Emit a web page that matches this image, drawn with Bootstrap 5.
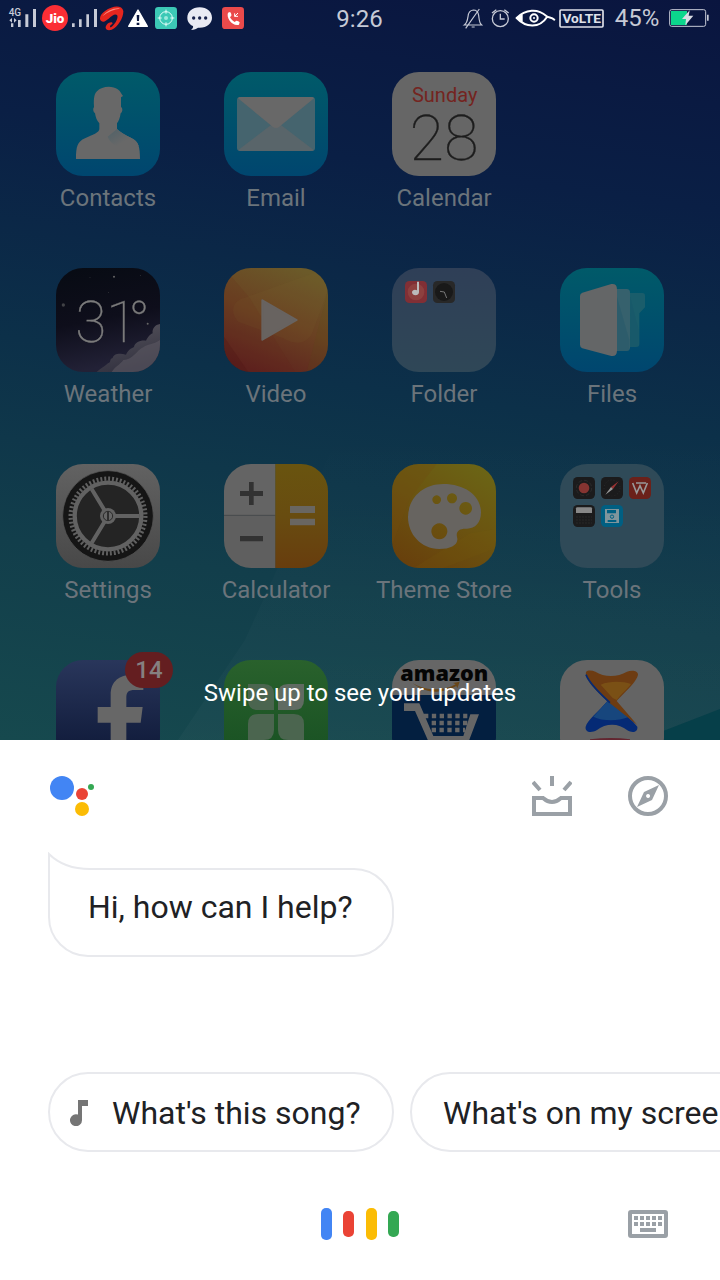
<!DOCTYPE html>
<html lang="en">
<head>
<meta charset="utf-8">
<meta name="viewport" content="width=device-width, initial-scale=1">
<title>Assistant</title>
<link href="https://cdn.jsdelivr.net/npm/bootstrap@5.3.0/dist/css/bootstrap.min.css" rel="stylesheet">
<style>
body{font-family:Roboto,"Noto Sans",sans-serif;color:#202124;background:#fff}
svg{display:block;flex:none}
.phone{height:100vh}
.launcher{background:linear-gradient(188deg,#0a153f 0%,#0a1f45 25%,#0c3049 52%,#123e4b 76%,#16494e 100%);min-height:0}
.wall{inset:auto 0 0 0;width:100%;height:320px}
.status{height:40px;padding:0 9px 0 8px;color:#c6cad6;font-size:24px;line-height:38px}
.status svg{height:40px}
.status-side{flex:1 1 0}
.pct{width:62px;text-align:center;line-height:36px}
.apps{padding:32px 24px 0;row-gap:52px}
.app{color:#6b747b;font-size:24px;line-height:32px;height:144px;white-space:nowrap}
.app:hover{color:#6b747b}
.tile{width:104px;height:104px;margin-bottom:6px}
.tile svg{width:104px;height:104px;border-radius:27px}
.count{top:-8px;right:-13px;width:48px;height:36px;border-radius:18px;background:#641e20;color:#858080;font-size:24px;line-height:36px}
.swipe{inset:auto 0 31px 0;color:#fff;font-size:24px;line-height:32px}
.sheet{padding:36px 0 40px}
.sheet-top{height:40px;padding:0 52px 0 48px}
.actions{gap:56px}
.bubble{margin:52px 48px 0;height:89px;padding:0 38px 12px;min-width:346px;border:2px solid #e8e9ed;border-radius:0 40px 40px 40px;font-size:32px}
.tail{left:-2px;top:-18px}
.chips{margin-top:115px;padding-left:48px;gap:16px}
.chip{height:80px;border:2px solid #e8e9ed;border-radius:40px;padding:2px 31px 0;font-size:32px;white-space:nowrap;flex:none;color:#202124}
.chip-icon{min-width:346px;padding-left:20px;gap:22px}
.sheet-foot{margin-top:56px;padding:0 52px}
</style>
</head>
<body>
<div class="phone d-flex flex-column overflow-hidden">
<main class="launcher position-relative flex-grow-1 overflow-hidden">
  <svg class="wall position-absolute" viewBox="0 0 720 320" preserveAspectRatio="none" aria-hidden="true">
    <defs><linearGradient id="ray" x2="0" y2="1"><stop stop-color="#fff" stop-opacity="0"/><stop offset="1" stop-color="#fff" stop-opacity=".025"/></linearGradient></defs>
    <path d="M178 320L245 220 345 0H720V320Z" fill="url(#ray)"/>
    <path d="M640 320L720 289V320Z" fill="#063f49"/>
  </svg>

  <header class="status position-relative d-flex align-items-start">
    <div class="status-side d-flex">
      <svg width="32" viewBox="24 0 96 120" role="img" aria-label="4G signal"><g fill="#c6cad6"><path d="M33 70h7v11h-7zM54 60h8v21h-8zM76 43h9v38h-9zM99 27h9v54h-9z"/><text x="26" y="48" font-size="30" font-weight="500" font-family="Roboto">4G</text><path d="M28 61l8-7v14zM50 61l-8-7v14z"/></g></svg>
      <svg width="30" viewBox="120 0 90 120"><circle cx="165" cy="54" r="39" fill="#fb2e35"/><text x="165" y="69" font-size="40" font-weight="900" font-family="Roboto" fill="#fff" text-anchor="middle">Jio</text></svg>
      <svg width="29" viewBox="210 0 87 120" role="img" aria-label="Signal"><path d="M216 70h8v11h-8zM237 58h8v23h-8zM259 43h8v38h-8zM282 27h9v54h-9z" fill="#c6cad6"/></svg>
      <svg width="27" viewBox="297 0 81 120" aria-hidden="true"><path d="M309 65C293 62 300 43 315 33C338 16 366 14 370 33C371 52 354 82 335 89C320 94 312 85 320 74C329 64 342 66 336 73C329 76 328 84 334 81C344 74 357 52 351 45C345 40 336 47 326 56C319 61 314 66 309 65Z" fill="#e5261f"/><path d="M307 49C322 31 345 22 360 26C342 27 324 35 307 49Z" fill="#ff897c"/></svg>
      <svg width="24" viewBox="378 0 72 120" aria-hidden="true"><path d="M414 30L442 79H386Z" fill="#fff" stroke="#fff" stroke-width="4" stroke-linejoin="round"/><path d="M410 45h8l-1 18h-6zM410 68h8v7h-8z" fill="#0a1740"/></svg>
      <svg width="32" viewBox="450 0 96 120" aria-hidden="true"><rect x="465" y="21" width="66" height="66" rx="10" fill="#3cc9b6"/><circle cx="498" cy="54" r="19" fill="none" stroke="#e8fffb" stroke-width="3"/><circle cx="498" cy="54" r="6" fill="#9aeadd"/><path d="M498 29v12M498 67v12M473 54h12M511 54h12" stroke="#e8fffb" stroke-width="3"/></svg>
      <svg width="35" viewBox="546 0 105 120" aria-hidden="true"><path d="M599 22C577 22 562 36 562 53C562 65 569 73 579 78C581 83 576 87 573 90C583 90 590 86 594 83C620 85 636 70 636 53C636 36 621 22 599 22Z" fill="#e9eaf3"/><g fill="#17214a"><circle cx="581" cy="54" r="5"/><circle cx="599" cy="54" r="5"/><circle cx="617" cy="54" r="5"/></g></svg>
      <svg width="32" viewBox="651 0 96 120" aria-hidden="true"><rect x="666" y="21" width="66" height="66" rx="10" fill="#ea4a4b"/><path d="M684 38l6-2c3 3 5 8 4 11l-4 5c4 7 8 10 14 14l5-4c4 0 9 3 10 5l-2 7c-20 5-39-20-33-36z" fill="#fff"/><path d="M714 39l-10 10m0-9v9h10" fill="none" stroke="#fff" stroke-width="3"/></svg>
    </div>
    <time>9:26</time>
    <div class="status-side d-flex justify-content-end">
      <svg width="27" viewBox="30 0 81 120" aria-hidden="true"><g fill="none" stroke="#c6cad6" stroke-width="3.500"><path d="M43 75H95C87 68 88 60 86 46C84 33 78 30 70 30C60 31 55 38 54 50C52 65 50 70 43 75ZM65 81h9M88 27L47 85"/></g></svg>
      <svg width="26" viewBox="111 0 78 120" aria-hidden="true"><g fill="none" stroke="#c6cad6" stroke-width="4"><circle cx="151" cy="56" r="24"/><path d="M151 41v16h13M126 39l13-10M176 39l-13-10"/></g></svg>
      <svg width="44" viewBox="189 0 132 120" aria-hidden="true"><path d="M200 54C226 27 264 25 289 48C296 54 304 51 313 59M200 54C226 82 268 87 291 51" fill="none" stroke="#fff" stroke-width="6" stroke-linecap="round"/><path d="M196 54l22-11v22z" fill="#fff"/><circle cx="252" cy="54" r="11" fill="none" stroke="#fff" stroke-width="6"/><circle cx="252" cy="54" r="3" fill="#fff"/></svg>
      <svg width="49" viewBox="321 0 147 120"><rect x="330" y="30" width="129" height="51" rx="3" fill="none" stroke="#dfe1e9" stroke-width="5"/><text x="395" y="70" font-size="41" font-weight="700" font-family="Roboto" fill="#dfe1e9" text-anchor="middle">VoLTE</text></svg>
      <span class="pct">45%</span>
      <svg width="43" viewBox="654 0 129 120" role="img" aria-label="Battery charging"><rect x="659" y="29" width="108" height="50" rx="6" fill="none" stroke="#c6cad6" stroke-width="3"/><path d="M663 33h48v42h-48z" fill="#0bd68c"/><path d="M771 44h5v18h-5z" fill="#c6cad6"/><path d="M719 31L696 57h12l-2 19 24-29h-14z" fill="#d9dce4"/></svg>
    </div>
  </header>

  <div class="apps row row-cols-4 gx-0 position-relative mx-0">
    <div class="col d-flex justify-content-center"><button class="app btn p-0 border-0 d-flex flex-column align-items-center">
      <span class="tile"><svg viewBox="48 36 312 312"><defs><linearGradient id="cy" x2="0" y2="1"><stop stop-color="#005a69"/><stop offset="1" stop-color="#00466f"/></linearGradient><linearGradient id="sh" x2="1" y2="1"><stop stop-color="#4f6168"/><stop offset=".6" stop-color="#686868"/></linearGradient></defs><path fill="url(#cy)" d="M48 36h312v312H48z"/><path d="M108 297C108 260 112 245 135 235C158 224 178 218 178 207V190C170 182 167 172 165 160C159 156 158 146 162 141C160 110 165 99 171 94C184 78 218 76 233 88C242 94 243 102 249 108L243 112V141C249 145 248 156 242 160C240 174 236 184 231 190V207C240 217 255 224 274 234C296 244 300 262 300 297Z" fill="#686868"/><path d="M231 207C240 217 255 224 274 234C286 240 292 246 296 258C260 272 215 262 203 230Z" fill="url(#sh)"/></svg></span>Contacts</button></div>
    <div class="col d-flex justify-content-center"><button class="app btn p-0 border-0 d-flex flex-column align-items-center">
      <span class="tile"><svg viewBox="552 36 312 312"><path fill="url(#cy)" d="M552 36h312v312H552z"/><rect x="591" y="111" width="234" height="162" rx="9" fill="#45646e"/><path d="M595 270L700 190h16L821 270Q819 273 814 273H602Q597 273 595 270Z" fill="#59656a"/><path d="M594 115Q597 111 602 111H814Q819 111 822 115L718 200Q708 208 698 200Z" fill="#686868"/></svg></span>Email</button></div>
    <div class="col d-flex justify-content-center"><button class="app btn p-0 border-0 d-flex flex-column align-items-center">
      <span class="tile"><svg viewBox="36 36 312 312"><path fill="#666" d="M36 36h312v312H36z"/><text x="194" y="126" text-anchor="middle" font-family="Roboto" font-size="60" fill="#742420">Sunday</text><text x="192" y="300" text-anchor="middle" font-family="Roboto" font-weight="100" font-size="189" fill="#1d1d1d" stroke="#1d1d1d" stroke-width="1">28</text></svg></span>Calendar</button></div>
    <div class="col"></div>

    <div class="col d-flex justify-content-center"><button class="app btn p-0 border-0 d-flex flex-column align-items-center">
      <span class="tile"><svg viewBox="48 24 312 312"><defs><linearGradient id="nt" x2=".2" y2="1"><stop stop-color="#070b13"/><stop offset=".55" stop-color="#0e0e1b"/><stop offset="1" stop-color="#222136"/></linearGradient><linearGradient id="cl" x2=".3" y2="1"><stop stop-color="#56545c"/><stop offset="1" stop-color="#343341"/></linearGradient></defs><path fill="url(#nt)" d="M48 24h312v312H48z"/><path d="M360 192C345 194 336 206 338 220C325 226 322 236 318 242C300 240 284 248 282 261C266 268 262 276 258 284C238 278 220 282 218 294C206 298 216 305 204 310C192 322 180 326 170 336H360Z" fill="url(#cl)"/><path d="M360 240C340 254 320 252 310 262C290 270 280 300 250 300C240 314 225 320 215 336H360Z" fill="#5c5962" opacity=".6"/><g fill="#666"><circle cx="222" cy="50" r="3"/><circle cx="70" cy="135" r="5" opacity=".6"/><circle cx="323" cy="191" r="3"/><circle cx="301" cy="47" r="1"/><circle cx="150" cy="52" r="1"/><circle cx="206" cy="98" r="1"/></g><text x="106" y="245" font-family="Roboto" font-weight="100" font-size="170" fill="#7b7b7b" stroke="#7b7b7b" stroke-width="1">31<tspan dx="-27">°</tspan></text></svg></span>Weather</button></div>
    <div class="col d-flex justify-content-center"><button class="app btn p-0 border-0 d-flex flex-column align-items-center">
      <span class="tile"><svg viewBox="552 24 312 312"><defs><linearGradient id="vd" x1=".7" x2=".3" y2="1"><stop stop-color="#6b5a29"/><stop offset=".5" stop-color="#6a4122"/><stop offset="1" stop-color="#5d211e"/></linearGradient></defs><path fill="url(#vd)" d="M552 24h312v312H552z"/><path d="M552 24L630 115 765 336H552Z" fill="#601d1c" opacity=".12"/><path d="M820 40L610 115C575 125 570 160 595 185L730 235C780 265 810 240 820 210L864 90V24Z" fill="#807030" opacity=".1"/><path d="M864 90L800 336H864Z" fill="#551" opacity=".12"/><path d="M552 230L625 336H552Z" fill="#411" opacity=".2"/><path d="M667 121L770 180 667 239Z" fill="#686360" stroke="#686360" stroke-width="6" stroke-linejoin="round"/></svg></span>Video</button></div>
    <div class="col d-flex justify-content-center"><button class="app btn p-0 border-0 d-flex flex-column align-items-center">
      <span class="tile"><svg viewBox="36 24 312 312"><defs><linearGradient id="fo" x2="0" y2="1"><stop stop-color="#2f3f57"/><stop offset="1" stop-color="#2f4757"/></linearGradient></defs><path fill="url(#fo)" d="M36 24h312v312H36z"/><rect x="75" y="63" width="66" height="66" rx="13" fill="#812f35"/><circle cx="108" cy="96" r="25" fill="#8d403f"/><path d="M111 65h6v32c0 12-21 12-21 0 0-7 9-10 15-6z" fill="#bbb"/><rect x="159" y="63" width="66" height="66" rx="13" fill="#282828"/><circle cx="192" cy="96" r="27" fill="#191919"/><path d="M180 94l13 2 7 18" fill="none" stroke="#777" stroke-width="3"/></svg></span>Folder</button></div>
    <div class="col d-flex justify-content-center"><button class="app btn p-0 border-0 d-flex flex-column align-items-center">
      <span class="tile"><svg viewBox="540 24 312 312"><path fill="url(#cy)" d="M540 24h312v312H540z"/><path d="M700 99H787Q795 99 795 107V142L778 160V252Q778 261 768 261H700Z" fill="#1a5d6b"/><path d="M690 87H740Q750 87 750 98V262Q750 273 740 273H690Z" fill="#36616d"/><path d="M751 110L776 210V252Q775 261 768 261H750ZM711 110L748 240V262Q748 273 740 273H711Z" fill="#125167" opacity=".25"/><path d="M600 108Q600 101 607 98L694 72Q711 70 711 88V272Q711 290 694 288L607 265Q600 263 600 254Z" fill="#646667"/></svg></span>Files</button></div>

    <div class="col d-flex justify-content-center"><button class="app btn p-0 border-0 d-flex flex-column align-items-center">
      <span class="tile"><svg viewBox="48 27 312 312"><defs><linearGradient id="st" x2="0" y2="1"><stop stop-color="#626262"/><stop offset="1" stop-color="#484848"/></linearGradient></defs><path fill="url(#st)" d="M48 27h312v312H48z"/><circle cx="204" cy="183" r="136" fill="#151515"/><circle cx="204" cy="183" r="136" fill="none" stroke="#5c5c5c" stroke-width="2"/><circle cx="204" cy="183" r="112" fill="none" stroke="#606060" stroke-width="13" stroke-dasharray="5.860 5.860"/><circle cx="204" cy="183" r="100" fill="#242424" stroke="#626262" stroke-width="13"/><path d="M204 183H298M204 183L155 102M204 183L155 264" stroke="#626262" stroke-width="12"/><circle cx="204" cy="183" r="24" fill="#626262"/><circle cx="204" cy="183" r="14" fill="#666" stroke="#292929" stroke-width="3"/><path d="M204 171v24" stroke="#252525" stroke-width="5"/></svg></span>Settings</button></div>
    <div class="col d-flex justify-content-center"><button class="app btn p-0 border-0 d-flex flex-column align-items-center">
      <span class="tile"><svg viewBox="552 27 312 312"><defs><linearGradient id="ca" x2="0" y2="1"><stop stop-color="#69540f"/><stop offset=".5" stop-color="#684c10"/><stop offset="1" stop-color="#683d0e"/></linearGradient></defs><path fill="#646464" d="M552 27h155v155H552z"/><path fill="#5f5f5f" d="M552 182h155v157H552z"/><path d="M552 181h155" stroke="#444" stroke-width="2"/><path fill="url(#ca)" d="M706 27h158v312H706z"/><path d="M627 81h14v27h28v15h-28v27h-14v-27h-27v-15h27zM600 243h69v16h-69z" fill="#323232"/><path d="M750 153h75v21h-75zM750 191h75v20h-75z" fill="#696661"/></svg></span>Calculator</button></div>
    <div class="col d-flex justify-content-center"><button class="app btn p-0 border-0 d-flex flex-column align-items-center">
      <span class="tile"><svg viewBox="66 27 312 312"><defs><linearGradient id="th" x1=".8" x2=".2" y2="1"><stop stop-color="#6b6415"/><stop offset=".5" stop-color="#6b5310"/><stop offset="1" stop-color="#68400c"/></linearGradient></defs><path fill="url(#th)" d="M66 27h312v312H66z"/><path d="M200 27L120 130 66 270V27Z" fill="#704c10" opacity=".3"/><path d="M130 339L300 235 378 222V280L220 339Z" fill="#7a6010" opacity=".15"/><path fill-rule="evenodd" d="M220 87C285 87 333 122 333 172C333 204 315 222 289 221C269 220 257 228 261 246C268 268 244 282 207 282C153 281 114 238 114 186C115 130 157 87 220 87ZM200 121a13 13 0 1 0 .1 0ZM246 115a15 15 0 1 0 .1 0ZM287 141a19 19 0 1 0 .1 0ZM208 205a24 24 0 1 0 .1 0Z" fill="#676460"/></svg></span>Theme Store</button></div>
    <div class="col d-flex justify-content-center"><button class="app btn p-0 border-0 d-flex flex-column align-items-center">
      <span class="tile"><svg viewBox="570 27 312 312"><path fill="#2f4a58" d="M570 27h312v312H570z"/><g fill="#1b1b1c"><rect x="609" y="66" width="66" height="66" rx="14"/><rect x="693" y="66" width="66" height="66" rx="14"/><rect x="609" y="150" width="66" height="66" rx="14"/></g><circle cx="642" cy="99" r="16" fill="#853431"/><circle cx="642" cy="99" r="23" fill="none" stroke="#333" stroke-width="2" stroke-dasharray="12 6"/><circle cx="726" cy="99" r="24" fill="none" stroke="#333" stroke-width="2" stroke-dasharray="3 6"/><path d="M746 79L723 96 729 102Z" fill="#933"/><path d="M706 119L723 96 729 102Z" fill="#999"/><rect x="777" y="66" width="66" height="66" rx="14" fill="#6b211a"/><path d="M788 84l12 30 10-22 10 22 12-30M798 84h30" fill="none" stroke="#999" stroke-width="5"/><path d="M618 160q0-3 4-3h40q4 0 4 3v14h-48z" fill="#888"/><path d="M619 186h47M619 195h47M619 204h47" stroke="#303030" stroke-width="3" stroke-dasharray="4 5"/><rect x="693" y="150" width="66" height="66" rx="14" fill="#005f82"/><path d="M705 162h42v42h-42z" fill="#80959c"/><path d="M711 165h27v10h-27zM713 195h26v6h-26z" fill="#005f82"/><circle cx="726" cy="185" r="5" fill="none" stroke="#005f82" stroke-width="3"/></svg></span>Tools</button></div>

    <div class="col d-flex justify-content-center"><button class="app btn p-0 border-0 d-flex flex-column align-items-center" aria-label="Facebook, 14 notifications">
      <span class="tile position-relative"><svg viewBox="48 60 312 312"><defs><linearGradient id="fb" x2="0" y2="1"><stop stop-color="#29365b"/><stop offset=".8" stop-color="#121d3d"/></linearGradient></defs><path fill="url(#fb)" d="M48 60h312v312H48z"/><path d="M212 372V248H173V201H212V165C212 122 240 105 275 105H310V150H285C264 150 259 157 259 174V201H308L302 248H259V372Z" fill="#676767"/></svg><span class="count position-absolute text-center fw-medium">14</span></span></button></div>
    <div class="col d-flex justify-content-center"><button class="app btn p-0 border-0 d-flex flex-column align-items-center" aria-label="Apps">
      <span class="tile"><svg viewBox="552 60 312 312"><defs><linearGradient id="gr" x2="0" y2="1"><stop stop-color="#29612c"/><stop offset="1" stop-color="#175022"/></linearGradient></defs><path fill="url(#gr)" d="M552 60h312v312H552z"/><g fill="#4b654f"><path d="M624 132h48q30 0 30 30v48h-48q-30 0-30-30zM654 222h48v48q0 30-30 30h-48v-48q0-30 30-30zM714 222h48q30 0 30 30v48h-48q-30 0-30-30z"/></g><path d="M744 132h48v48q0 30-30 30h-48v-48q0-30 30-30z" fill="#606b62"/></svg></span></button></div>
    <div class="col d-flex justify-content-center"><button class="app btn p-0 border-0 d-flex flex-column align-items-center" aria-label="Amazon">
      <span class="tile"><svg viewBox="96 60 312 312"><path fill="#666" d="M96 60h312v312H96z"/><path fill="#031f40" d="M96 165h312v207H96z"/><text x="253" y="124" text-anchor="middle" font-family="Open Sans" font-weight="800" font-size="65" fill="#050505">amazon</text><path d="M158 129C195 153 250 154 287 133L279 129 299 125 292 145 289 138C247 164 194 160 158 129Z" fill="#694719"/><path d="M132 190H178L220 288H310L331 223H357L322 315H210L165 213H132Z" fill="#666"/><g fill="none" stroke="#666" stroke-width="13" stroke-dasharray="13 10.500"><path d="M192 228H322M215 249H322M215 270H315"/></g></svg></span></button></div>
    <div class="col d-flex justify-content-center"><button class="app btn p-0 border-0 d-flex flex-column align-items-center" aria-label="Xender">
      <span class="tile"><svg viewBox="600 60 312 312"><path fill="#646464" d="M600 60h312v312H600z"/><path d="M742 184C717 213 681 242 677 260C674 274 690 282 711 270C738 248 777 249 802 271C816 279 834 278 832 260C801 223 736 178 705 145Z" fill="#052a75"/><path d="M742 184C765 199 786 216 804 232C770 245 725 243 700 230Z" fill="#17467d"/><path d="M678 96C684 89 696 91 706 95C732 112 773 112 801 95C813 90 834 90 834 104C831 125 790 160 770 183L832 255L748 188C723 164 672 122 678 96Z" fill="#6d3c12"/><path d="M722 134C750 122 790 124 813 132C800 150 785 160 770 180L758 174Z" fill="#805817" opacity=".7"/><path d="M678 104C690 135 725 165 750 188" fill="none" stroke="#052a75" stroke-width="5"/><path d="M690 298q65-8 120 0v8H690z" fill="#632630"/></svg></span></button></div>
  </div>
  <div class="swipe position-absolute text-center">Swipe up to see your updates</div>
</main>

<section class="sheet bg-white">
  <div class="sheet-top d-flex justify-content-between">
    <svg width="48" height="42" viewBox="48 776 48 42" role="img" aria-label="Assistant"><circle cx="62" cy="788" r="12" fill="#4285f4"/><circle cx="82" cy="794" r="6" fill="#ea4335"/><circle cx="91" cy="787" r="3" fill="#34a853"/><circle cx="82" cy="809" r="7" fill="#fbbc05"/></svg>
    <div class="actions d-flex">
      <button class="btn p-0 border-0" aria-label="Updates"><svg width="40" height="40" viewBox="0 0 40 40" fill="none" stroke="#9aa0a6" stroke-width="4"><path d="M20 0v10M1 6l7 8M39 6l-7 8M2 38V22H11Q20 30 29 22H38V38Z"/></svg></button>
      <button class="btn p-0 border-0" aria-label="Explore"><svg width="40" height="40" viewBox="0 0 40 40"><circle cx="20" cy="20" r="18" fill="none" stroke="#9aa0a6" stroke-width="4"/><path fill-rule="evenodd" d="M31 9L24 24 9 31 16 16ZM20 18a2 2 0 1 0 .1 0Z" fill="#9aa0a6"/></svg></button>
    </div>
  </div>
  <div class="d-flex"><div class="bubble position-relative d-flex align-items-center">
    <svg class="tail position-absolute" width="42" height="24" viewBox="0 0 42 24" aria-hidden="true"><path d="M0 1V24H42V17Q16 17 0 1Z" fill="#fff"/><path d="M1 24V2Q16 17 42 17" fill="none" stroke="#e8e9ed" stroke-width="2"/></svg>
    Hi, how can I help?</div></div>
  <div class="chips d-flex overflow-hidden">
    <button class="chip chip-icon btn d-flex align-items-center"><svg width="20" height="26" viewBox="0 0 20 26" aria-hidden="true"><path d="M8 0H18V6H12V20A6 6 0 1 1 8 14.500Z" fill="#757575"/></svg>What's this song?</button>
    <button class="chip btn">What's on my screen?</button>
  </div>
  <div class="sheet-foot row gx-0 mx-0 align-items-center">
    <div class="col"></div>
    <button class="col-auto btn p-0 border-0" aria-label="Listening"><svg width="80" height="32" viewBox="0 0 80 32"><rect x="1" width="11" height="32" rx="5" fill="#4285f4"/><rect x="23" y="3" width="11" height="26" rx="5" fill="#ea4335"/><rect x="46" width="11" height="32" rx="5" fill="#fbbc05"/><rect x="68" y="3" width="11" height="26" rx="5" fill="#34a853"/></svg></button>
    <div class="col d-flex justify-content-end"><button class="btn p-0 border-0" aria-label="Keyboard"><svg width="40" height="28" viewBox="0 0 40 28"><rect x="2" y="2" width="36" height="24" rx="1" fill="none" stroke="#9aa0a6" stroke-width="4"/><path d="M6 8H34M6 14H34" stroke="#9aa0a6" stroke-width="4" stroke-dasharray="4 2"/><path d="M12 18h16v4H12z" fill="#9aa0a6"/></svg></button></div>
  </div>
</section>
</div>
<script src="https://cdn.jsdelivr.net/npm/bootstrap@5.3.0/dist/js/bootstrap.bundle.min.js"></script>
</body>
</html>
